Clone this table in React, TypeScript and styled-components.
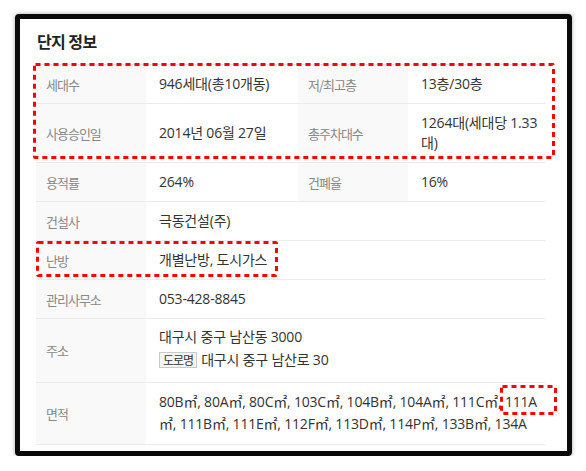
import React from 'react';
import styled, { createGlobalStyle } from 'styled-components';

const GlobalStyle = createGlobalStyle`
  html, body { margin: 0; padding: 0; background: #fff; }
  body {
    font-family: "Open Sans", "Noto Sans CJK KR", sans-serif;
  }
  * { box-sizing: border-box; }
`;

const Page = styled.div`
  padding: 14px 0 0 15px;
`;

const Frame = styled.section`
  position: relative;
  width: 557px;
  height: 442px;
  border: 5px solid #0a0a0a;
  border-radius: 4px;
  background: #fff;
  box-shadow: 0 0 4px rgba(0, 0, 0, 0.35);
  padding: 11px 0 0 16px;
`;

const Title = styled.h2`
  margin: 0 0 12px 1px;
  font-family: "Noto Sans CJK KR", sans-serif;
  font-size: 16px;
  line-height: 22px;
  font-weight: 700;
  color: #222;
  letter-spacing: -0.6px;
`;

const Table = styled.div`
  width: 509px;
  border-top: 1px solid #e2e2e2;
  font-size: 14px;
`;

const Row = styled.div`
  display: grid;
  grid-template-columns: 110px 152px 110px 137px;
  border-bottom: 1px solid #ebebeb;
`;

const Label = styled.div`
  display: flex;
  align-items: center;
  padding: 0 10px;
  background: #f9f9f9;
  color: #888;
  font-family: "Noto Sans CJK KR", sans-serif;
  font-size: 13px;
  letter-spacing: -1px;
`;

const Value = styled.div<{ $span?: boolean; $lh?: number; $pad?: string }>`
  grid-column: ${(p) => (p.$span ? 'span 3' : 'auto')};
  display: flex;
  flex-direction: column;
  justify-content: center;
  padding: ${(p) => p.$pad ?? '9px 13px'};
  line-height: ${(p) => p.$lh ?? 20}px;
  color: #333;
  letter-spacing: -0.2px;
  white-space: nowrap;
`;

const Line = styled.div<{ $h?: number; $mt?: number }>`
  display: flex;
  align-items: center;
  height: ${(p) => (p.$h ? `${p.$h}px` : 'auto')};
  margin-top: ${(p) => p.$mt ?? 0}px;
`;

const RoadTag = styled.span`
  display: inline-block;
  height: 16px;
  line-height: 14px;
  padding: 0 3px;
  margin-right: 4px;
  border: 1px solid #c9c9c9;
  background: #f5f5f5;
  font-family: "Noto Sans CJK KR", sans-serif;
  font-size: 12px;
  letter-spacing: -1px;
  color: #333;
`;

const Mark = styled.div<{ $x: number; $y: number; $w: number; $h: number }>`
  position: absolute;
  left: ${(p) => p.$x}px;
  top: ${(p) => p.$y}px;
  width: ${(p) => p.$w}px;
  height: ${(p) => p.$h}px;
  pointer-events: none;
  svg { display: block; }
`;

function Highlight({ x, y, w, h }: { x: number; y: number; w: number; h: number }) {
  return (
    <Mark $x={x} $y={y} $w={w} $h={h}>
      <svg width={w} height={h}>
        <rect
          x={1.5}
          y={1.5}
          width={w - 3}
          height={h - 3}
          rx={1}
          fill="none"
          stroke="#ff0000"
          strokeWidth={3}
          strokeDasharray="5 4"
        />
      </svg>
    </Mark>
  );
}

export default function App() {
  return (
    <>
      <GlobalStyle />
      <Page>
        <Frame>
          <Title>단지 정보</Title>
          <Table>
            <Row>
              <Label>세대수</Label>
              <Value>946세대(총10개동)</Value>
              <Label>저/최고층</Label>
              <Value>13층/30층</Value>
            </Row>
            <Row>
              <Label>사용승인일</Label>
              <Value>2014년 06월 27일</Value>
              <Label>총주차대수</Label>
              <Value>
                <span>1264대(세대당 1.33</span>
                <span>대)</span>
              </Value>
            </Row>
            <Row>
              <Label>용적률</Label>
              <Value>264%</Value>
              <Label>건폐율</Label>
              <Value>16%</Value>
            </Row>
            <Row>
              <Label>건설사</Label>
              <Value $span>극동건설(주)</Value>
            </Row>
            <Row>
              <Label>난방</Label>
              <Value $span>개별난방, 도시가스</Value>
            </Row>
            <Row>
              <Label>관리사무소</Label>
              <Value $span>053-428-8845</Value>
            </Row>
            <Row>
              <Label>주소</Label>
              <Value $span $pad="8px 13px 11px">
                <Line>대구시 중구 남산동 3000</Line>
                <Line $h={22} $mt={2}>
                  <RoadTag>도로명</RoadTag>대구시 중구 남산로 30
                </Line>
              </Value>
            </Row>
            <Row>
              <Label>면적</Label>
              <Value $span $lh={22} $pad="8px 13px 9px">
                <span>80B㎡, 80A㎡, 80C㎡, 103C㎡, 104B㎡, 104A㎡, 111C㎡, 111A</span>
                <span>㎡, 111B㎡, 111E㎡, 112F㎡, 113D㎡, 114P㎡, 133B㎡, 134A</span>
              </Value>
            </Row>
          </Table>
          <Highlight x={13} y={44} w={522} h={96} />
          <Highlight x={16} y={222} w={242} h={36} />
          <Highlight x={480} y={366} w={57} h={30} />
        </Frame>
      </Page>
    </>
  );
}
